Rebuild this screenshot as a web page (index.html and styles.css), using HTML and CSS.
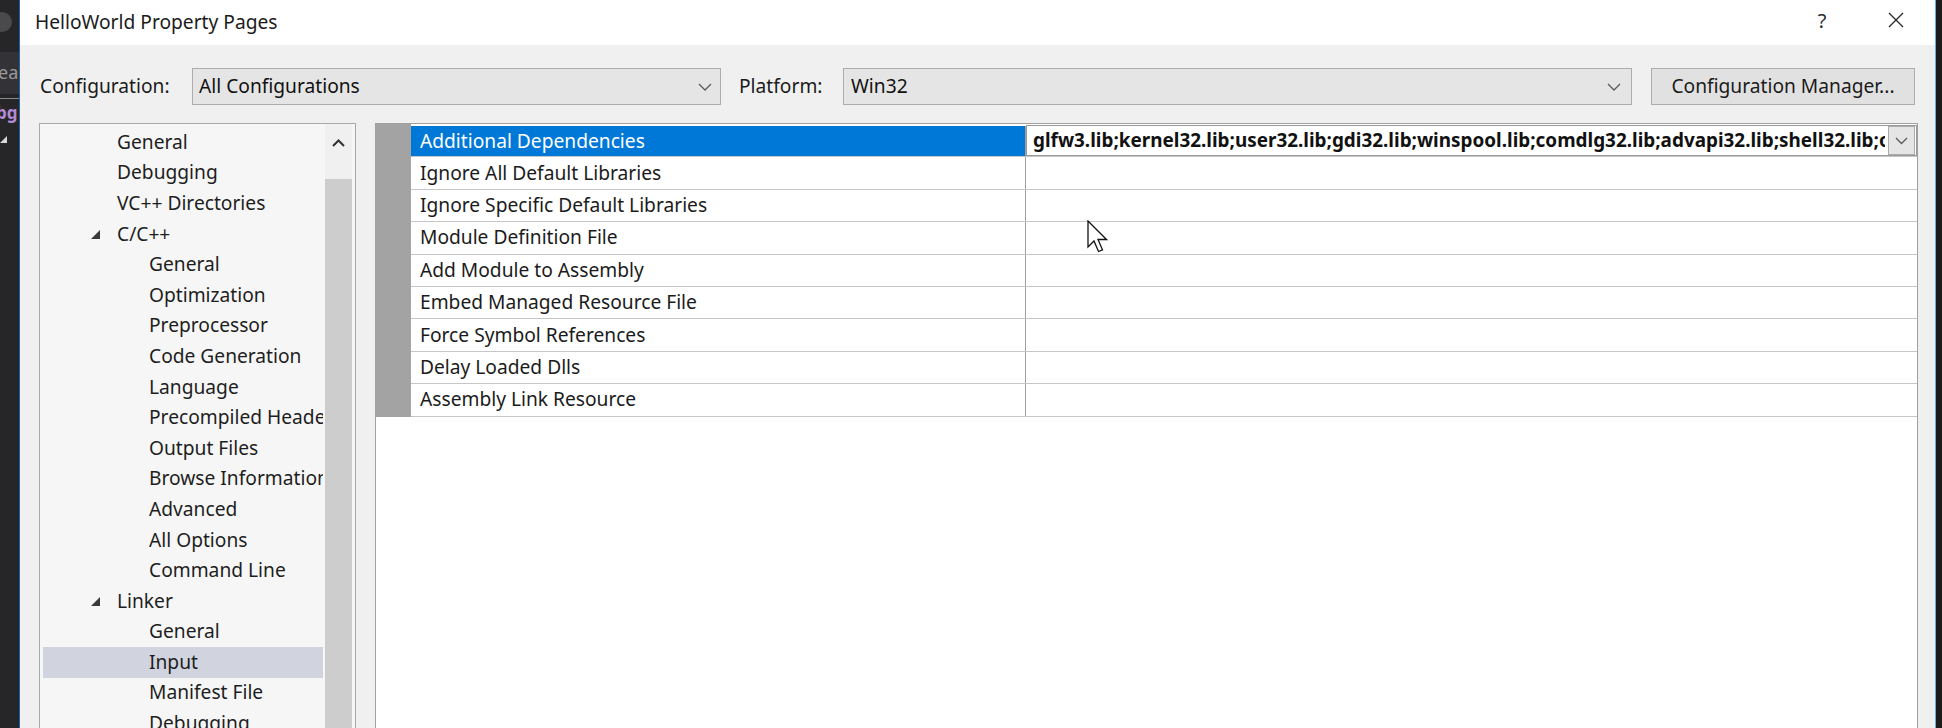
FILE: index.html
```html
<!DOCTYPE html>
<html>
<head>
<meta charset="utf-8">
<title>HelloWorld Property Pages</title>
<link rel="stylesheet" href="styles.css">
</head>
<body>
<div class="screen">
  <div class="side-left">
    <span class="deco-circle"></span>
    <div class="deco-band"><span class="deco-text">ea</span></div>
    <div class="deco-line"></div>
    <span class="deco-purple">bg</span>
    <span class="deco-tri"></span>
  </div>

  <div class="dialog">
    <div class="titlebar">
      <span class="title">HelloWorld Property Pages</span>
      <span class="help">?</span>
      <span class="close">
        <svg width="16" height="16" viewBox="0 0 16 16"><path d="M1 1 L15 15 M15 1 L1 15" stroke="#2b2b2b" stroke-width="1.4" fill="none"/></svg>
      </span>
    </div>

    <div class="toolbar">
      <span class="lbl lbl-config">Configuration:</span>
      <div class="combo combo-config">
        <span class="combo-text">All Configurations</span>
        <svg class="chev" width="14" height="8" viewBox="0 0 14 8"><path d="M1 1 L7 7 L13 1" stroke="#5a5a5a" stroke-width="1.3" fill="none"/></svg>
      </div>
      <span class="lbl lbl-platform">Platform:</span>
      <div class="combo combo-platform">
        <span class="combo-text">Win32</span>
        <svg class="chev" width="14" height="8" viewBox="0 0 14 8"><path d="M1 1 L7 7 L13 1" stroke="#5a5a5a" stroke-width="1.3" fill="none"/></svg>
      </div>
      <button class="btn">Configuration Manager...</button>
    </div>

    <div class="main">
      <div class="tree">
        <ul class="tree-list">
          <li class="tree-item"><span class="toggle"></span><span>General</span></li>
          <li class="tree-item"><span class="toggle"></span><span>Debugging</span></li>
          <li class="tree-item"><span class="toggle"></span><span>VC++ Directories</span></li>
          <li class="tree-item"><span class="toggle"><svg width="9" height="9" viewBox="0 0 9 9"><path d="M9 0 L9 9 L0 9 Z" fill="#3a3a3a"/></svg></span><span>C/C++</span></li>
          <li class="tree-item lvl2"><span class="toggle"></span><span>General</span></li>
          <li class="tree-item lvl2"><span class="toggle"></span><span>Optimization</span></li>
          <li class="tree-item lvl2"><span class="toggle"></span><span>Preprocessor</span></li>
          <li class="tree-item lvl2"><span class="toggle"></span><span>Code Generation</span></li>
          <li class="tree-item lvl2"><span class="toggle"></span><span>Language</span></li>
          <li class="tree-item lvl2"><span class="toggle"></span><span>Precompiled Headers</span></li>
          <li class="tree-item lvl2"><span class="toggle"></span><span>Output Files</span></li>
          <li class="tree-item lvl2"><span class="toggle"></span><span>Browse Information</span></li>
          <li class="tree-item lvl2"><span class="toggle"></span><span>Advanced</span></li>
          <li class="tree-item lvl2"><span class="toggle"></span><span>All Options</span></li>
          <li class="tree-item lvl2"><span class="toggle"></span><span>Command Line</span></li>
          <li class="tree-item"><span class="toggle"><svg width="9" height="9" viewBox="0 0 9 9"><path d="M9 0 L9 9 L0 9 Z" fill="#3a3a3a"/></svg></span><span>Linker</span></li>
          <li class="tree-item lvl2"><span class="toggle"></span><span>General</span></li>
          <li class="tree-item lvl2 selected"><span class="toggle"></span><span>Input</span></li>
          <li class="tree-item lvl2"><span class="toggle"></span><span>Manifest File</span></li>
          <li class="tree-item lvl2"><span class="toggle"></span><span>Debugging</span></li>
        </ul>
        <div class="scrollbar">
          <div class="sb-up">
            <svg width="13" height="8" viewBox="0 0 13 8"><path d="M1 7 L6.5 1.5 L12 7" stroke="#333" stroke-width="2" fill="none"/></svg>
          </div>
          <div class="sb-thumb"></div>
        </div>
      </div>

      <div class="grid">
        <div class="grid-body">
          <div class="gutter"></div>
          <div class="rows">
            <div class="row sel">
              <div class="name">Additional Dependencies</div>
              <div class="value edit">
                <span class="value-text">glfw3.lib;kernel32.lib;user32.lib;gdi32.lib;winspool.lib;comdlg32.lib;advapi32.lib;shell32.lib;ole32.lib;oleaut32.lib;uuid.lib;odbc32.lib;odbccp32.lib;%(AdditionalDependencies)</span>
                <span class="dd-btn">
                  <svg width="13" height="8" viewBox="0 0 13 8"><path d="M1 1 L6.5 6.5 L12 1" stroke="#5a5a5a" stroke-width="1.3" fill="none"/></svg>
                </span>
              </div>
            </div>
            <div class="row"><div class="name">Ignore All Default Libraries</div><div class="value"></div></div>
            <div class="row"><div class="name">Ignore Specific Default Libraries</div><div class="value"></div></div>
            <div class="row"><div class="name">Module Definition File</div><div class="value"></div></div>
            <div class="row"><div class="name">Add Module to Assembly</div><div class="value"></div></div>
            <div class="row"><div class="name">Embed Managed Resource File</div><div class="value"></div></div>
            <div class="row"><div class="name">Force Symbol References</div><div class="value"></div></div>
            <div class="row"><div class="name">Delay Loaded Dlls</div><div class="value"></div></div>
            <div class="row"><div class="name">Assembly Link Resource</div><div class="value"></div></div>
          </div>
        </div>
      </div>
    </div>
  </div>

  <div class="side-right"></div>

  <svg class="cursor" width="21" height="34" viewBox="0 0 21 34">
    <path d="M1 1 L1 27 L7 21 L11.5 31.5 L15.5 29.8 L11 19.5 L19.5 19.5 Z" fill="#fff" stroke="#111" stroke-width="1.3" stroke-linejoin="miter"/>
  </svg>
</div>
</body>
</html>
```

FILE: styles.css
```css
html, body {
  margin: 0;
  padding: 0;
  height: 100%;
}

body {
  background: #1e1e1e;
  font-family: "Noto Sans", "Open Sans", "Liberation Sans", sans-serif;
  font-size: 19.2px;
  color: #1b1b1b;
  overflow: hidden;
}

.screen {
  position: relative;
  display: flex;
  width: 1942px;
  height: 728px;
  overflow: hidden;
}

/* ---------- background IDE slivers ---------- */
.side-left {
  position: relative;
  width: 19px;
  flex: none;
  background: #262628;
  overflow: hidden;
}

.deco-circle {
  position: absolute;
  left: -8px;
  top: 12px;
  width: 20px;
  height: 20px;
  border-radius: 50%;
  background: #4a4a4d;
}

.deco-band {
  position: absolute;
  left: 0;
  top: 52px;
  width: 19px;
  height: 42px;
  background: #333337;
  overflow: hidden;
}

.deco-text {
  position: absolute;
  left: -2px;
  top: 8px;
  color: #9a9a9a;
  font-size: 18px;
}

.deco-line {
  position: absolute;
  left: 0;
  top: 98px;
  width: 19px;
  height: 1px;
  background: #8a8a8a;
}

.deco-purple {
  position: absolute;
  left: -4px;
  top: 101px;
  color: #b58ad6;
  font-size: 17px;
  font-weight: bold;
}

.deco-tri {
  position: absolute;
  left: 0;
  top: 136px;
  width: 0;
  height: 0;
  border-left: 7px solid transparent;
  border-bottom: 7px solid #d8d8d8;
}

.side-right {
  flex: 1;
  background: #1b1b1c;
}

/* ---------- dialog ---------- */
.dialog {
  width: 1917px;
  flex: none;
  box-sizing: border-box;
  border-left: 1px solid #1d5fa8;
  border-right: 1px solid #59b4ea;
  background: #f0f0f0;
  display: flex;
  flex-direction: column;
}

.titlebar {
  height: 45px;
  flex: none;
  background: #ffffff;
  display: flex;
  align-items: center;
  padding: 0 16px 0 15px;
}

.title {
  flex: 1;
  padding-bottom: 3px;
  color: #1b1b1b;
}

.help {
  width: 46px;
  text-align: center;
  font-size: 20px;
  color: #2b2b2b;
  padding-bottom: 4px;
}

.close {
  width: 46px;
  margin-left: 28px;
  display: flex;
  justify-content: center;
  padding-bottom: 5px;
}

/* ---------- configuration row ---------- */
.toolbar {
  margin-top: 23px;
  height: 37px;
  flex: none;
  display: flex;
  align-items: center;
  padding: 0 20px;
}

.lbl {
  flex: none;
  color: #1b1b1b;
  padding-bottom: 2px;
}

.lbl-config {
  width: 152px;
}

.lbl-platform {
  width: 104px;
  margin-left: 18px;
}

.combo {
  box-sizing: border-box;
  height: 37px;
  flex: none;
  border: 1px solid #adadad;
  background: #e5e5e5;
  display: flex;
  align-items: center;
  justify-content: space-between;
}

.combo-text {
  padding-bottom: 2px;
  color: #111;
}

.combo-config {
  width: 529px;
  padding: 0 8px 0 6px;
}

.combo-platform {
  width: 789px;
  padding: 0 10px 0 7px;
}

.btn {
  box-sizing: border-box;
  margin-left: 19px;
  width: 264px;
  height: 37px;
  flex: none;
  border: 1px solid #adadad;
  background: #e1e1e1;
  font: inherit;
  color: #1b1b1b;
  padding: 0 0 2px 0;
}

/* ---------- main area ---------- */
.main {
  flex: 1;
  min-height: 0;
  margin-top: 18px;
  display: flex;
  gap: 19px;
  padding: 0 17px 0 19px;
}

.tree {
  width: 317px;
  flex: none;
  box-sizing: border-box;
  border: 1px solid #a9a9a9;
  border-bottom: none;
  background: #f6f6f6;
  display: flex;
  overflow: hidden;
}

.tree-list {
  flex: 1;
  min-width: 0;
  list-style: none;
  margin: 0;
  padding: 3px 2px 0 3px;
}

.tree-item {
  height: 30.6px;
  display: flex;
  align-items: center;
  white-space: nowrap;
  overflow: hidden;
  padding-left: 48px;
  color: #1e1e1e;
}

.tree-item span:last-child {
  padding-bottom: 2px;
}

.tree-item.lvl2 {
  padding-left: 80px;
}

.tree-item.selected {
  background: #d1d4de;
}

.toggle {
  width: 26px;
  flex: none;
  display: flex;
  align-items: center;
}

.scrollbar {
  width: 27px;
  flex: none;
  margin-right: 3px;
  background: #f0f0f0;
  display: flex;
  flex-direction: column;
}

.sb-up {
  height: 38px;
  display: flex;
  align-items: center;
  justify-content: center;
}

.sb-thumb {
  flex: 1;
  margin-top: 17px;
  background: #cdcdcd;
}

/* ---------- property grid ---------- */
.grid {
  width: 1543px;
  flex: none;
  min-width: 0;
  box-sizing: border-box;
  border: 1px solid #a0a0a0;
  border-bottom: none;
  background: #ffffff;
  overflow: hidden;
}

.grid-body {
  display: flex;
  min-width: 0;
}

.gutter {
  width: 35px;
  flex: none;
  background: #a3a3a3;
}

.rows {
  flex: 1;
  min-width: 0;
  padding-top: 1px;
}

.row {
  display: flex;
  height: 32.4px;
  box-sizing: border-box;
  border-bottom: 1px solid #c6c6c6;
  min-width: 0;
}

.name {
  width: 615px;
  flex: none;
  box-sizing: border-box;
  border-right: 1px solid #a0a0a0;
  padding: 0 0 2px 9px;
  display: flex;
  align-items: center;
  white-space: nowrap;
  color: #1b1b1b;
}

.row.sel .name {
  background: #0078d7;
  color: #ffffff;
  margin-top: 1px;
}

.value {
  flex: 1;
  min-width: 0;
  display: flex;
  align-items: center;
}

.value.edit {
  box-sizing: border-box;
  border: 1px solid #9a9a9a;
  padding-left: 6px;
}

.value-text {
  flex: 1;
  min-width: 0;
  overflow: hidden;
  white-space: nowrap;
  font-weight: bold;
  font-size: 18.9px;
  color: #111;
  padding-bottom: 2px;
}

.dd-btn {
  box-sizing: border-box;
  width: 27px;
  height: 29px;
  flex: none;
  margin: 0 1px 0 3px;
  border: 1px solid #acacac;
  background: #e5e5e5;
  display: flex;
  align-items: center;
  justify-content: center;
}

/* ---------- mouse pointer overlay ---------- */
.cursor {
  position: absolute;
  left: 1087px;
  top: 220px;
}
```
